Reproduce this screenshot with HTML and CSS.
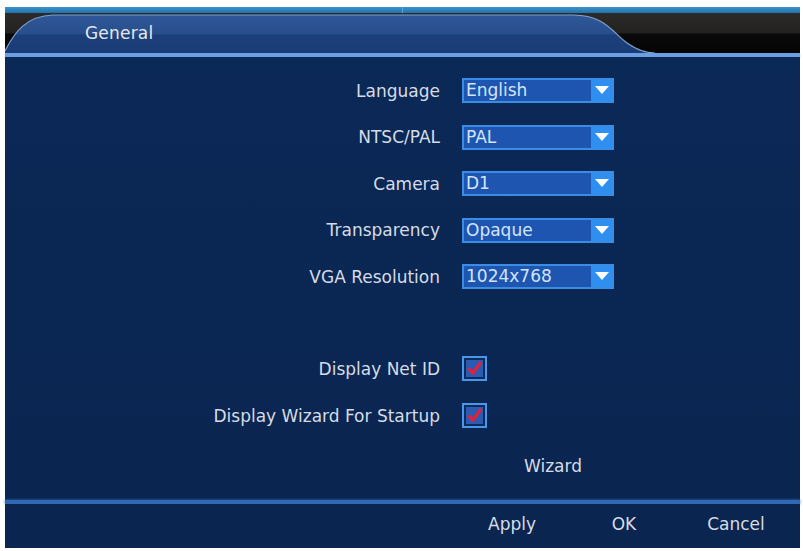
FILE: index.html
```html
<!DOCTYPE html>
<html>
<head>
<meta charset="utf-8">
<link rel="stylesheet" href="styles.css">
</head>
<body>
<div class="screen">
  <div class="topband"><span class="topband-seg"></span><span class="topband-seg"></span></div>
  <div class="tabbar">
    <svg class="tab-shape" width="795" height="40" viewBox="0 0 795 40" preserveAspectRatio="none">
      <defs>
        <linearGradient id="tabfill" x1="0" y1="0" x2="0" y2="1">
          <stop offset="0" stop-color="#2f5898"/>
          <stop offset="0.5" stop-color="#284e8c"/>
          <stop offset="0.52" stop-color="#1c3f7a"/>
          <stop offset="1" stop-color="#1a3c76"/>
        </linearGradient>
      </defs>
      <path d="M0 38 C 10 18, 22 3, 48 2 L 568 2 C 600 2, 608 20, 622 30 C 632 37, 640 40, 650 40 L 0 40 Z" fill="url(#tabfill)"/>
      <path d="M0 38 C 10 18, 22 3, 48 2 L 568 2 C 600 2, 608 20, 622 30 C 632 37, 640 40, 650 40" fill="none" stroke="#7f9fcc" stroke-width="1.2"/>
    </svg>
    <span class="tab-title">General</span>
  </div>
  <div class="rule"></div>
  <div class="content">
    <div class="form">
      <div class="row">
        <label class="label">Language</label>
        <div class="select"><span class="select-value">English</span><span class="select-arrow"></span></div>
      </div>
      <div class="row">
        <label class="label">NTSC/PAL</label>
        <div class="select"><span class="select-value">PAL</span><span class="select-arrow"></span></div>
      </div>
      <div class="row">
        <label class="label">Camera</label>
        <div class="select"><span class="select-value">D1</span><span class="select-arrow"></span></div>
      </div>
      <div class="row">
        <label class="label">Transparency</label>
        <div class="select"><span class="select-value">Opaque</span><span class="select-arrow"></span></div>
      </div>
      <div class="row">
        <label class="label">VGA Resolution</label>
        <div class="select"><span class="select-value">1024x768</span><span class="select-arrow"></span></div>
      </div>
    </div>
    <div class="form checks">
      <div class="row">
        <label class="label">Display Net ID</label>
        <div class="checkbox">
          <svg width="17" height="17" viewBox="0 0 17 17"><rect width="17" height="17" fill="#2a5cb4"/><path d="M2.5 8.5 L7 13 L15 2" fill="none" stroke="#e3203a" stroke-width="3.2"/></svg>
        </div>
      </div>
      <div class="row">
        <label class="label">Display Wizard For Startup</label>
        <div class="checkbox">
          <svg width="17" height="17" viewBox="0 0 17 17"><rect width="17" height="17" fill="#2a5cb4"/><path d="M2.5 8.5 L7 13 L15 2" fill="none" stroke="#e3203a" stroke-width="3.2"/></svg>
        </div>
      </div>
    </div>
    <div class="wizard-row"><span class="wizard">Wizard</span></div>
  </div>
  <div class="footline"></div>
  <div class="footer">
    <span class="btn">Apply</span>
    <span class="btn">OK</span>
    <span class="btn">Cancel</span>
  </div>
</div>
</body>
</html>
```

FILE: styles.css
```css
html, body {
  margin: 0;
  padding: 0;
  background: #ffffff;
}

body {
  font-family: "DejaVu Sans", "Liberation Sans", sans-serif;
  font-size: 17px;
  color: #d8dee8;
}

.screen {
  margin: 7px 3px 0 5px;
  width: 795px;
  height: 541px;
  display: flex;
  flex-direction: column;
  background: #0a2652;
}

.topband {
  height: 6px;
  flex: none;
  display: flex;
  background: linear-gradient(#3a93cc, #2373ad);
}

.topband-seg {
  flex: 1;
}

.topband-seg + .topband-seg {
  border-left: 1px solid #5aa6d8;
}

.tabbar {
  height: 40px;
  flex: none;
  position: relative;
  background: linear-gradient(#2c2b2a 0%, #232220 50%, #0a0a0a 52%, #050505 100%);
  display: flex;
  align-items: center;
}

.tab-shape {
  position: absolute;
  left: 0;
  top: 0;
}

.tab-title {
  position: relative;
  padding-left: 80px;
  margin-top: 0;
  color: #e4e8ee;
  letter-spacing: 0.2px;
}

.rule {
  height: 4px;
  flex: none;
  background: #6c9fe2;
  box-shadow: 0 1px 1px #3d6fb8;
}

.content {
  flex: 1;
  display: flex;
  flex-direction: column;
  background: linear-gradient(#0b2957, #0a2550);
}

.form {
  display: flex;
  flex-direction: column;
  gap: 21.5px;
  padding-top: 21px;
}

.form.checks {
  padding-top: 67px;
  gap: 22px;
}

.row {
  display: grid;
  grid-template-columns: 435px auto;
  column-gap: 22px;
  align-items: center;
  height: 25px;
}

.label {
  text-align: right;
  color: #d6dce6;
  white-space: nowrap;
}

.select {
  width: 148px;
  height: 21px;
  border: 2px solid #3a8de4;
  background: #1d55b0;
  display: flex;
  align-items: center;
}

.select-value {
  flex: 1;
  padding-left: 2px;
  color: #d3e4ff;
  line-height: 21px;
}

.select-arrow {
  width: 21px;
  height: 21px;
  background: #2e8ff0;
  position: relative;
}

.select-arrow::after {
  content: "";
  position: absolute;
  left: 4px;
  top: 6px;
  border-left: 7px solid transparent;
  border-right: 7px solid transparent;
  border-top: 8px solid #ffffff;
}

.checkbox {
  width: 21px;
  height: 21px;
  border: 2px solid #4a97e8;
  background: #0d2a5c;
  display: flex;
  align-items: center;
  justify-content: center;
}

.checkbox svg {
  display: block;
}

.wizard-row {
  padding-top: 28px;
  padding-left: 519px;
}

.wizard {
  color: #d6dce6;
}

.footline {
  height: 4px;
  flex: none;
  background: #2f68b4;
  box-shadow: 0 0 3px #3a78c8;
}

.footer {
  height: 44px;
  flex: none;
  display: flex;
  justify-content: flex-end;
  align-items: center;
  padding-right: 8px;
  padding-bottom: 4px;
  box-sizing: border-box;
  background: #0a2550;
}

.btn {
  width: 112px;
  text-align: center;
  color: #d6dce6;
}
```
